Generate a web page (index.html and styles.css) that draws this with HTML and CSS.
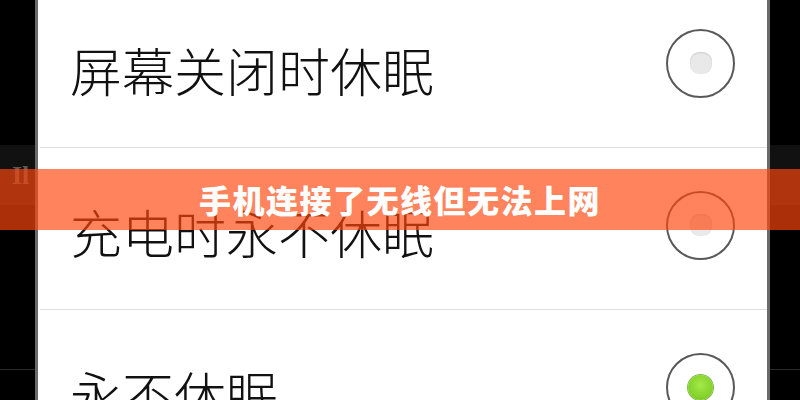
FILE: index.html
```html
<!DOCTYPE html>
<html lang="zh-CN">
<head>
  <meta charset="UTF-8">
  <meta name="viewport" content="width=device-width, initial-scale=1.0">
  <title>手机连接了无线但无法上网</title>
  <link rel="stylesheet" href="styles.css">
</head>
<body>
  <div class="screen">
    <div class="gutter gutter-left">
      <div class="band"><span class="tag">Il</span></div>
      <div class="rule"></div>
    </div>

    <div class="dialog">
      <ul class="options">
        <li class="option">
          <span class="label">屏幕关闭时休眠</span>
          <span class="radio"><span class="dot"></span></span>
        </li>
        <li class="option">
          <span class="label">充电时永不休眠</span>
          <span class="radio"><span class="dot"></span></span>
        </li>
        <li class="option">
          <span class="label">永不休眠</span>
          <span class="radio checked"><span class="dot"></span></span>
        </li>
      </ul>
    </div>

    <div class="gutter gutter-right">
      <div class="band"></div>
      <div class="rule"></div>
    </div>
  </div>

  <div class="banner">手机连接了无线但无法上网</div>
</body>
</html>
```

FILE: styles.css
```css
html, body { margin: 0; padding: 0; height: 100%; overflow: hidden; }
body { background: #000; font-family: "Noto Sans CJK SC", "Noto Sans", sans-serif; position: relative; }

.screen { display: flex; height: 400px; }

/* dark strips either side of the dialog */
.gutter { display: flex; flex-direction: column; padding-top: 145px; }
.gutter-left { width: 35px; }
.gutter-right { flex: 1; }
.band { height: 60px; background: #111; position: relative; }
.rule { margin-top: 164px; height: 1px; background: #2a2a2a; }
.tag {
  display: block; padding: 18px 0 0 12px;
  font: bold 26px/1 "Liberation Serif", serif; color: #5a5a5a;
}

.dialog {
  width: 729px; height: 400px; overflow: hidden;
  background: #fff;
  border-left: 3px solid #6a6a6a; border-right: 3px solid #6a6a6a;
}

.options { list-style: none; margin: -14px 0 0; padding: 0; }
.option {
  height: 161px; margin-left: 2px;
  display: flex; align-items: center; justify-content: space-between;
  padding: 0 32px 0 30px;
  border-bottom: 1px solid #dedede;
}
.label { font-size: 52px; font-weight: 300; color: #111; line-height: 1; padding-top: 7px; }

.radio {
  width: 65px; height: 65px; border-radius: 50%;
  border: 2.5px solid #595959;
  display: flex; align-items: center; justify-content: center;
  margin-bottom: 7px;
}
.dot {
  width: 22px; height: 22px; border-radius: 9px;
  background: #e9e9e9;
  box-shadow: inset 0 1px 2px rgba(0,0,0,0.12);
}
.radio.checked .dot {
  width: 25px; height: 25px; border-radius: 50%;
  background: radial-gradient(circle at 50% 40%, #a3e84a 0%, #86d42c 60%, #6fb820 100%);
  box-shadow: 0 0 0 1px #7fb94a;
}

/* translucent title strip laid over the screenshot */
.banner {
  position: absolute; left: 0; right: 0; top: 169px;
  height: 61px; line-height: 60px;
  background: rgba(255, 72, 15, 0.67);
  color: #fff; text-align: center;
  font-size: 32px; font-weight: 900; letter-spacing: 1.5px;
}
```
